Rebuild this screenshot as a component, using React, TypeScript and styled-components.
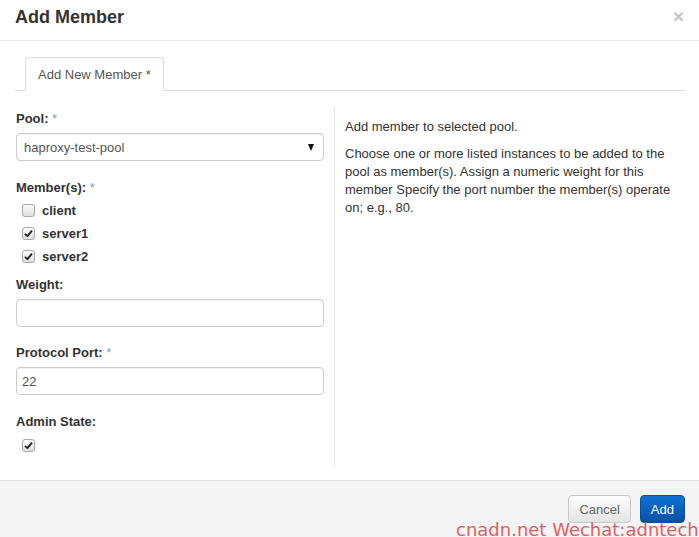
import React from "react";
import styled, { createGlobalStyle } from "styled-components";

const Global = createGlobalStyle`
  html, body { margin: 0; padding: 0; background: #fff; }
  body { font-family: "Liberation Sans", Arial, sans-serif; font-size: 13px; color: #333; }
  * { box-sizing: border-box; }
`;

const Modal = styled.div`
  position: relative;
  width: 699px;
  height: 537px;
  background: #fff;
  display: flex;
  flex-direction: column;
  overflow: hidden;
`;

const Header = styled.div`
  display: flex;
  align-items: center;
  justify-content: space-between;
  height: 41px;
  padding: 0 15px 6px 15px;
  border-bottom: 1px solid #e5e5e5;
`;

const Title = styled.h3`
  margin: 0;
  font-size: 18px;
  font-weight: bold;
  color: #333;
  line-height: 20px;
`;

const Close = styled.span`
  font-size: 19px;
  font-weight: bold;
  color: #c4c4c4;
  line-height: 1;
  margin-top: -2px;
  margin-right: 0px;
`;

const Body = styled.div`
  flex: 1;
  padding: 16px 14px 0 15px;
`;

const TabList = styled.div`
  display: flex;
  padding-left: 10px;
  border-bottom: 1px solid #ddd;
  height: 34px;
`;

const Tab = styled.div`
  height: 34px;
  padding: 0 12px;
  display: flex;
  align-items: center;
  border: 1px solid #ddd;
  border-bottom-color: #fff;
  border-radius: 4px 4px 0 0;
  background: #fff;
  color: #555;
  font-size: 13px;
`;

const Row = styled.div`
  display: grid;
  grid-template-columns: 320px 1fr;
  margin-top: 17px;
`;

const LeftCol = styled.div`
  padding: 1px 10px 8px 1px;
  border-right: 1px solid #e3e3e3;
`;

const RightCol = styled.div`
  padding: 10px 0 0 10px;
  font-size: 13px;
  line-height: 18px;
  color: #333;
`;

const Para = styled.p`
  margin: 0 0 9px 0;
`;

const Group = styled.div<{ $mb?: number }>`
  margin-bottom: ${(p) => (p.$mb ?? 16)}px;
`;

const Label = styled.div<{ $mb?: number }>`
  font-weight: bold;
  font-size: 13px;
  line-height: 20px;
  color: #333;
  margin-bottom: ${(p) => (p.$mb ?? 4)}px;
`;

const Req = styled.span`
  color: #7fa5bd;
  font-weight: normal;
`;

const SelectBox = styled.div`
  height: 28px;
  border: 1px solid #ccc;
  border-radius: 4px;
  display: flex;
  align-items: center;
  justify-content: space-between;
  padding: 0 6px 0 7px;
  color: #555;
  font-size: 13px;
  box-shadow: inset 0 1px 1px rgba(0,0,0,0.05);
`;

const Arrow = styled.span`
  width: 0;
  height: 0;
  border-left: 3.5px solid transparent;
  border-right: 3.5px solid transparent;
  border-top: 7px solid #111;
  margin-right: 3px;
`;

const Input = styled.div`
  height: 28px;
  border: 1px solid #ccc;
  border-radius: 4px;
  display: flex;
  align-items: center;
  padding: 0 5px;
  color: #555;
  font-size: 13px;
  box-shadow: inset 0 1px 1px rgba(0,0,0,0.06);
`;

const CheckRow = styled.div`
  height: 23px;
  display: flex;
  align-items: center;
  padding-left: 6px;
  gap: 7px;
  font-weight: bold;
  color: #333;
`;

const Box = styled.span`
  width: 13px;
  height: 13px;
  border: 1px solid #a9a9a9;
  border-radius: 3px;
  background: linear-gradient(#fbfbfb, #dedede);
  display: inline-flex;
  align-items: center;
  justify-content: center;
`;

const Footer = styled.div`
  height: 57px;
  border-top: 1px solid #e0e0e0;
  background: #f4f4f4;
  display: flex;
  justify-content: flex-end;
  align-items: flex-start;
  padding: 14px 14px 0 0;
  gap: 9px;
`;

const Button = styled.div<{ $primary?: boolean }>`
  height: 28px;
  display: flex;
  align-items: center;
  justify-content: center;
  padding: 0 10px;
  border-radius: 4px;
  font-size: 13px;
  border: 1px solid ${(p) => (p.$primary ? "#0a4f9e" : "#c8c8c8")};
  color: ${(p) => (p.$primary ? "#fff" : "#666")};
  background: ${(p) =>
    p.$primary ? "linear-gradient(#1071d3, #0551a8)" : "linear-gradient(#fefefe, #e4e4e4)"};
`;

const Watermark = styled.div`
  position: absolute;
  left: 456px;
  bottom: -3px;
  font-family: "DejaVu Sans", sans-serif;
  font-size: 18px;
  color: rgb(224, 96, 96);
  white-space: nowrap;
  pointer-events: none;
`;

const Check = ({ checked }: { checked?: boolean }) => (
  <Box>
    {checked && (
      <svg width="9" height="9" viewBox="0 0 9 9">
        <path d="M1 4.8 L3.4 7.2 L8 1.6" stroke="#222" strokeWidth="1.9" fill="none" strokeLinejoin="round" />
      </svg>
    )}
  </Box>
);

export default function App() {
  return (
    <>
      <Global />
      <Modal>
        <Header>
          <Title>Add Member</Title>
          <Close>×</Close>
        </Header>
        <Body>
          <TabList>
            <Tab>Add New Member *</Tab>
          </TabList>
          <Row>
            <LeftCol>
              <Group $mb={17}>
                <Label>
                  Pool: <Req>*</Req>
                </Label>
                <SelectBox>
                  haproxy-test-pool
                  <Arrow />
                </SelectBox>
              </Group>
              <Group $mb={7}>
                <Label $mb={1}>
                  Member(s): <Req>*</Req>
                </Label>
                <CheckRow>
                  <Check />
                  client
                </CheckRow>
                <CheckRow>
                  <Check checked />
                  server1
                </CheckRow>
                <CheckRow>
                  <Check checked />
                  server2
                </CheckRow>
              </Group>
              <Group>
                <Label>Weight:</Label>
                <Input />
              </Group>
              <Group $mb={17}>
                <Label>
                  Protocol Port: <Req>*</Req>
                </Label>
                <Input>22</Input>
              </Group>
              <Group $mb={0}>
                <Label $mb={2}>Admin State:</Label>
                <CheckRow>
                  <Check checked />
                </CheckRow>
              </Group>
            </LeftCol>
            <RightCol>
              <Para>Add member to selected pool.</Para>
              <Para>
                Choose one or more listed instances to be added to the pool as member(s). Assign a
                numeric weight for this member Specify the port number the member(s) operate on;
                e.g., 80.
              </Para>
            </RightCol>
          </Row>
        </Body>
        <Footer>
          <Button>Cancel</Button>
          <Button $primary>Add</Button>
        </Footer>
        <Watermark>cnadn.net Wechat:adntech</Watermark>
      </Modal>
    </>
  );
}
